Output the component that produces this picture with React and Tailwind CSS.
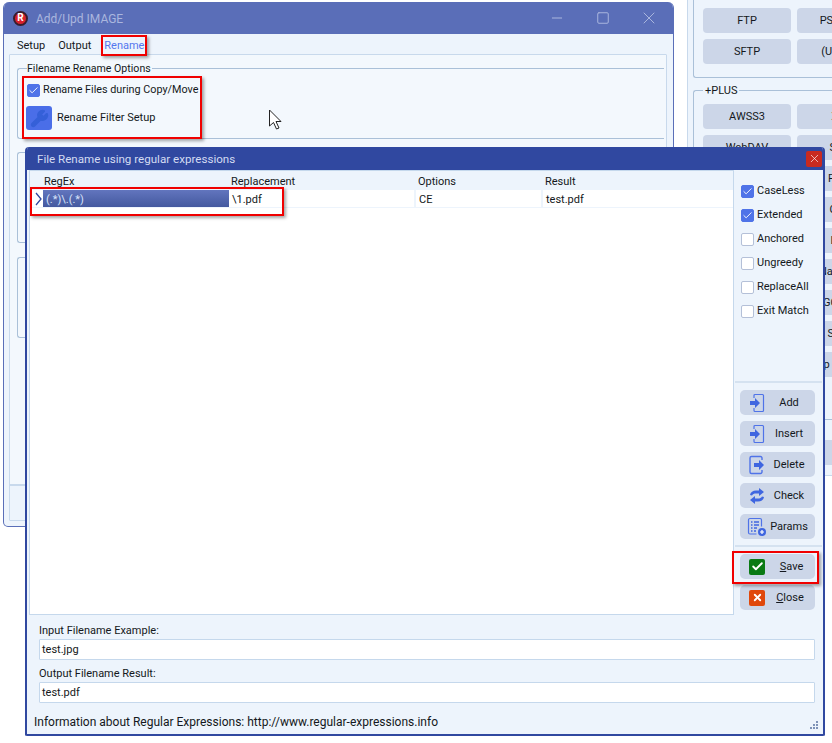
import { Wrench, Check, X, Minus, Square } from "lucide-react";

const hostA = ["FTP", "PS-SFTP", "SFTP", "(UNC-X)"];
const hostB = ["AWSS3", "XS3", "WebDAV", "SMB", "", "FTPS", "", "CIFS", "", "LAN", "", "Nas data", "", "GCloud", "", "SSH2", "", "Zip archive"];

const CheckBox = ({ checked, label, labelClass = "" }) => (
  <div className="flex items-center gap-[3px]">
    <span className={`flex h-[13px] w-[13px] items-center justify-center rounded-[2px] border ${checked ? "border-[#4f73e8] bg-[#4f73e8]" : "border-[#b4c0d8] bg-white"}`}>
      {checked && <Check size={11} strokeWidth={2} className="text-white" />}
    </span>
    <span className={labelClass}>{label}</span>
  </div>
);

const RedBox = ({ className }) => (
  <div className={`pointer-events-none absolute border-2 border-[#f00000] shadow-[2px_2px_3px_rgba(0,0,0,0.35)] ${className}`} />
);

const FileIn = () => (
  <svg width="16" height="20" viewBox="0 0 16 20" fill="none">
    <path d="M5 5V2.5A1 1 0 0 1 6 1.5h7.5a1 1 0 0 1 1 1v15a1 1 0 0 1-1 1H6a1 1 0 0 1-1-1V15" stroke="#4f73e8" strokeWidth="1.2" />
    <path d="M1 8h5V5l5 5-5 5v-3H1z" fill="#3f66e0" />
  </svg>
);

const FileOut = () => (
  <svg width="18" height="20" viewBox="0 0 18 20" fill="none">
    <path d="M14 5V3a1.5 1.5 0 0 0-1.5-1.5h-9A1.5 1.5 0 0 0 2 3v14a1.5 1.5 0 0 0 1.5 1.5h9A1.5 1.5 0 0 0 14 17v-2" stroke="#4f73e8" strokeWidth="1.4" />
    <path d="M6 8h5V5l5 5-5 5v-3H6z" fill="#3f66e0" />
  </svg>
);

const Swap = () => (
  <svg width="18" height="18" viewBox="0 0 18 18" fill="none">
    <path d="M2 8c.5-3 3-4.500 6-4.500h3V1l5 4-5 4V6.500H8C6 6.500 5 7 4 8.500z" fill="#3f66e0" />
    <path d="M16 10c-.5 3-3 4.500-6 4.500H7V17l-5-4 5-4v2.500h3c2 0 3-.5 4-2z" fill="#3f66e0" />
  </svg>
);

const ParamsIcon = () => (
  <svg width="20" height="20" viewBox="0 0 20 20" fill="none">
    <path d="M9.500 17H3a1.500 1.500 0 0 1-1.500-1.500V3A1.500 1.500 0 0 1 3 1.500h10A1.500 1.500 0 0 1 14.500 3v6.500" stroke="#4f73e8" strokeWidth="1.2" />
    <path d="M4 5h1.500M7 5h5M4 8h1.500M7 8h5M4 11h1.500M7 11h3M4 14h1.500M7 14h2" stroke="#3f66e0" strokeWidth="1.300" />
    <circle cx="15" cy="15" r="4" fill="#3f66e0" />
    <path d="M15 13v4M13 15h4" stroke="#fff" strokeWidth="1.200" />
  </svg>
);

const SideButton = ({ icon, children, right = "pr-[4px]" }) => (
  <div className="flex h-[25px] items-center rounded-[5px] bg-[#ccd6e8] pl-[7px]">
    <span className="flex w-[20px] justify-center">{icon}</span>
    <span className={`flex-1 text-center ${right}`}>{children}</span>
  </div>
);

const Field = ({ label, value }) => (
  <div>
    <div className="h-[17px] pt-px leading-[15px]">{label}</div>
    <div className="flex h-[21px] items-center rounded-[1px] border border-[#c5d8ec] bg-white pl-[2px] pt-px">{value}</div>
  </div>
);

const GroupBox = ({ title, className, children }) => (
  <fieldset className={`rounded-l-[3px] border-y border-l border-[#aac0d8] ${className}`}>
    {title && <legend className="pr-px leading-[14px]"><span className="block translate-y-px text-[10.6px]">{title}</span></legend>}
    {children}
  </fieldset>
);

const BackWindow = () => (
  <div className="absolute left-[3px] top-[2px] flex h-[525px] w-[671px] flex-col overflow-hidden rounded-t-[6px] rounded-b-[5px] border-x border-b border-[#5a6fb8] bg-[#edf4fc]">
    <div className="flex h-[32px] shrink-0 items-center bg-[#5a6eb8] pl-[9px] text-[#aab6de]">
      <span className="flex h-[15px] w-[15px] items-center justify-center rounded-full border-2 border-[#3a1c2c] bg-[#d8202c] text-[10px] font-bold leading-none text-white">R</span>
      <span className="ml-[8px] pt-[2px] text-[12px]">Add/Upd IMAGE</span>
      <div className="ml-auto flex items-center gap-[31px] pr-[16px]">
        <Minus size={16} strokeWidth={1.5} />
        <Square size={14} strokeWidth={1.7} />
        <X size={20} strokeWidth={1.2} className="-m-[2px]" />
      </div>
    </div>
    <div className="flex h-[20px] shrink-0 items-center gap-[13px] pl-[13px] pt-[3px]">
      <span>Setup</span>
      <span>Output</span>
      <span className="text-[#5577ee]">Rename</span>
    </div>
    <div className="ml-[5px] mr-[6px] flex flex-1 flex-col rounded-[1px] border border-[#c8d9ec]">
      <div className="flex-1 bg-[#f3f8fd] pl-[7px] pr-[2px] pt-[6px]">
        <GroupBox title="Filename Rename Options" className="h-[78px] pl-[9px]">
          <div className="pt-[7px]">
            <CheckBox checked label="Rename Files during Copy/Move" labelClass="text-[10.8px]" />
          </div>
          <div className="mt-[8px] -ml-px flex items-center gap-[5px]">
            <span className="flex h-[24px] w-[26px] items-center justify-center rounded-[3px] bg-[#4a6ee8]">
              <Wrench size={19} fill="#3560d8" stroke="#3560d8" />
            </span>
            <span>Rename Filter Setup</span>
          </div>
        </GroupBox>
        <GroupBox className="mt-[13px] h-[91px]" />
        <GroupBox className="mt-[14px] h-[81px]" />
      </div>
      <div className="h-[36px] shrink-0 border-t-2 border-[#c8d9ec]" />
    </div>
    <div className="h-[5px] shrink-0" />
  </div>
);

const RightWindow = () => (
  <div className="absolute left-[687px] top-0 h-[476px] w-[300px] border-l border-b border-[#c8d9ec] bg-[#edf4fc] pl-[5px]">
    <div className="h-[78px] rounded-bl-[3px] border-b border-l border-[#aac0d8] pl-[9px]">
      <div className="grid w-[182px] grid-cols-[88px_88px] gap-x-[6px] gap-y-[6px] pt-[8px]">
        {hostA.map((label) => (
          <div key={label} className="flex h-[25px] items-center justify-center whitespace-nowrap rounded-[4px] bg-[#ccd6e8]">{label}</div>
        ))}
      </div>
    </div>
    <fieldset className="mt-[5px] h-[337px] rounded-l-[3px] border-y border-l border-[#aac0d8] pl-[9px]">
      <legend className="px-[2px] leading-[14px]"><span className="block translate-y-px">+PLUS</span></legend>
      <div className="grid w-[182px] grid-cols-[88px_88px] gap-x-[6px] gap-y-[6px] pt-[7px]">
        {hostB.map((label, i) => (
          <div key={i} className="flex h-[25px] items-center justify-center whitespace-nowrap rounded-[4px] bg-[#ccd6e8]">{label}</div>
        ))}
      </div>
    </fieldset>
    <div className="ml-[9px] mt-[20px] grid w-[182px] grid-cols-[88px_88px] gap-x-[6px]">
      <div />
      <div className="h-[25px] rounded-[4px] bg-[#ccd6e8]" />
    </div>
  </div>
);

const Dialog = () => (
  <div className="absolute left-[25px] top-[147px] flex h-[589px] w-[800px] flex-col overflow-hidden rounded-t-[4px] rounded-b-[2px] border-x-2 border-b-2 border-[#3048a0] bg-[#edf4fc]">
    <div className="flex h-[23px] shrink-0 items-center justify-between bg-[#3048a0] pl-[10px] pr-[1px] text-[11.6px] text-[#d4dcf2]">
      <span>File Rename using regular expressions</span>
      <span className="flex h-[16px] w-[16px] items-center justify-center rounded-[2px] bg-[#c82a20]">
        <X size={13} strokeWidth={1.2} className="text-white" />
      </span>
    </div>
    <div className="flex h-[445px] shrink-0 pl-[2px]">
      <div className="w-[705px] border border-[#c5d8ec] bg-white">
        <div className="flex h-[19px] bg-[#edf4fc] pt-[2px] leading-[17px]">
          <span className="w-[201px] pl-[14px]">RegEx</span>
          <span className="w-[187px]">Replacement</span>
          <span className="w-[127px]">Options</span>
          <span>Result</span>
        </div>
        <div className="flex h-[18px] items-center border-b border-[#edf4fc] leading-[19px]">
          <span className="flex w-[13px] justify-end pr-[1px]">
            <svg width="7" height="14" viewBox="0 0 7 14" fill="none"><path d="M1 1l5 6-5 6" stroke="#3048a0" strokeWidth="1.300" /></svg>
          </span>
          <span className="h-full w-[186px] bg-gradient-to-b from-[#6275be] to-[#44599f] pl-[3px] text-[#d8e2fa]">(.*)\.(.*)</span>
          <span className="h-full w-[187px] border-r-2 border-[#edf4fc] pl-[3px]">\1.pdf</span>
          <span className="h-full w-[127px] border-r-2 border-[#edf4fc] pl-[3px]">CE</span>
          <span className="h-full pl-[3px]">test.pdf</span>
        </div>
      </div>
      <div className="flex flex-1 flex-col">
        <div className="flex h-[211px] flex-col gap-[8px] pl-[7px] pt-[13px]">
          <CheckBox checked label="CaseLess" />
          <CheckBox checked label="Extended" />
          <CheckBox label="Anchored" />
          <CheckBox label="Ungreedy" />
          <CheckBox label="ReplaceAll" />
          <CheckBox label="Exit Match" />
        </div>
        <div className="mx-px h-[2px] bg-[#d5e2f0]" />
        <div className="flex h-[162px] flex-col gap-[6px] pl-[6px] pr-[8px] pt-[7px]">
          <SideButton icon={<FileIn />}>Add</SideButton>
          <SideButton icon={<FileIn />}>Insert</SideButton>
          <SideButton icon={<FileOut />}>Delete</SideButton>
          <SideButton icon={<Swap />}>Check</SideButton>
          <SideButton icon={<ParamsIcon />}>Params</SideButton>
        </div>
        <div className="mx-px h-[2px] bg-[#d5e2f0]" />
        <div className="flex flex-col gap-[6px] pl-[6px] pr-[8px] pt-[7px]">
          <SideButton right="pl-px" icon={<span className="flex h-[16px] w-[16px] items-center justify-center rounded-[2px] bg-[#0a7a14]"><Check size={13} strokeWidth={3.5} className="text-white" /></span>}>
            <span><u>S</u>ave</span>
          </SideButton>
          <SideButton right="pr-[2px]" icon={<span className="flex h-[16px] w-[16px] items-center justify-center rounded-[2px] bg-[#e0480c]"><X size={11} strokeWidth={4} className="text-white" /></span>}>
            <span><u>C</u>lose</span>
          </SideButton>
        </div>
      </div>
    </div>
    <div className="flex flex-col gap-[5px] pl-[12px] pr-[8px] pt-[7px]">
      <Field label="Input Filename Example:" value="test.jpg" />
      <Field label="Output Filename Result:" value="test.pdf" />
    </div>
    <div className="relative flex flex-1 items-center pl-[7px] text-[12px]">
      <span className="mt-[6px]">Information about Regular Expressions: http://www.regular-expressions.info</span>
      <svg className="absolute bottom-[4px] right-[4px]" width="9" height="9" viewBox="0 0 9 9" fill="#7f93b8">
        <rect x="6" y="0" width="2" height="2" /><rect x="3" y="3" width="2" height="2" /><rect x="6" y="3" width="2" height="2" />
        <rect x="0" y="6" width="2" height="2" /><rect x="3" y="6" width="2" height="2" /><rect x="6" y="6" width="2" height="2" />
      </svg>
    </div>
  </div>
);

export default function App() {
  return (
    <div className="relative h-[743px] w-[832px] overflow-hidden bg-white text-[11px] leading-[16px] text-[#141820] [font-family:Roboto,sans-serif]">
      <BackWindow />
      <RightWindow />
      <svg className="absolute left-[268px] top-[109px]" width="15" height="22" viewBox="0 0 15 22">
        <path d="M1.500 1v16l4-3.500 3 6.500 2.500-1-3-6.500h5z" fill="#fff" stroke="#222" strokeWidth="1" />
      </svg>
      <RedBox className="left-[101px] top-[35px] h-[21px] w-[46px]" />
      <RedBox className="left-[22px] top-[76px] h-[63px] w-[180px]" />
      <Dialog />
      <RedBox className="left-[30px] top-[187px] h-[29px] w-[254px]" />
      <RedBox className="left-[732px] top-[551px] h-[33px] w-[87px]" />
    </div>
  );
}
